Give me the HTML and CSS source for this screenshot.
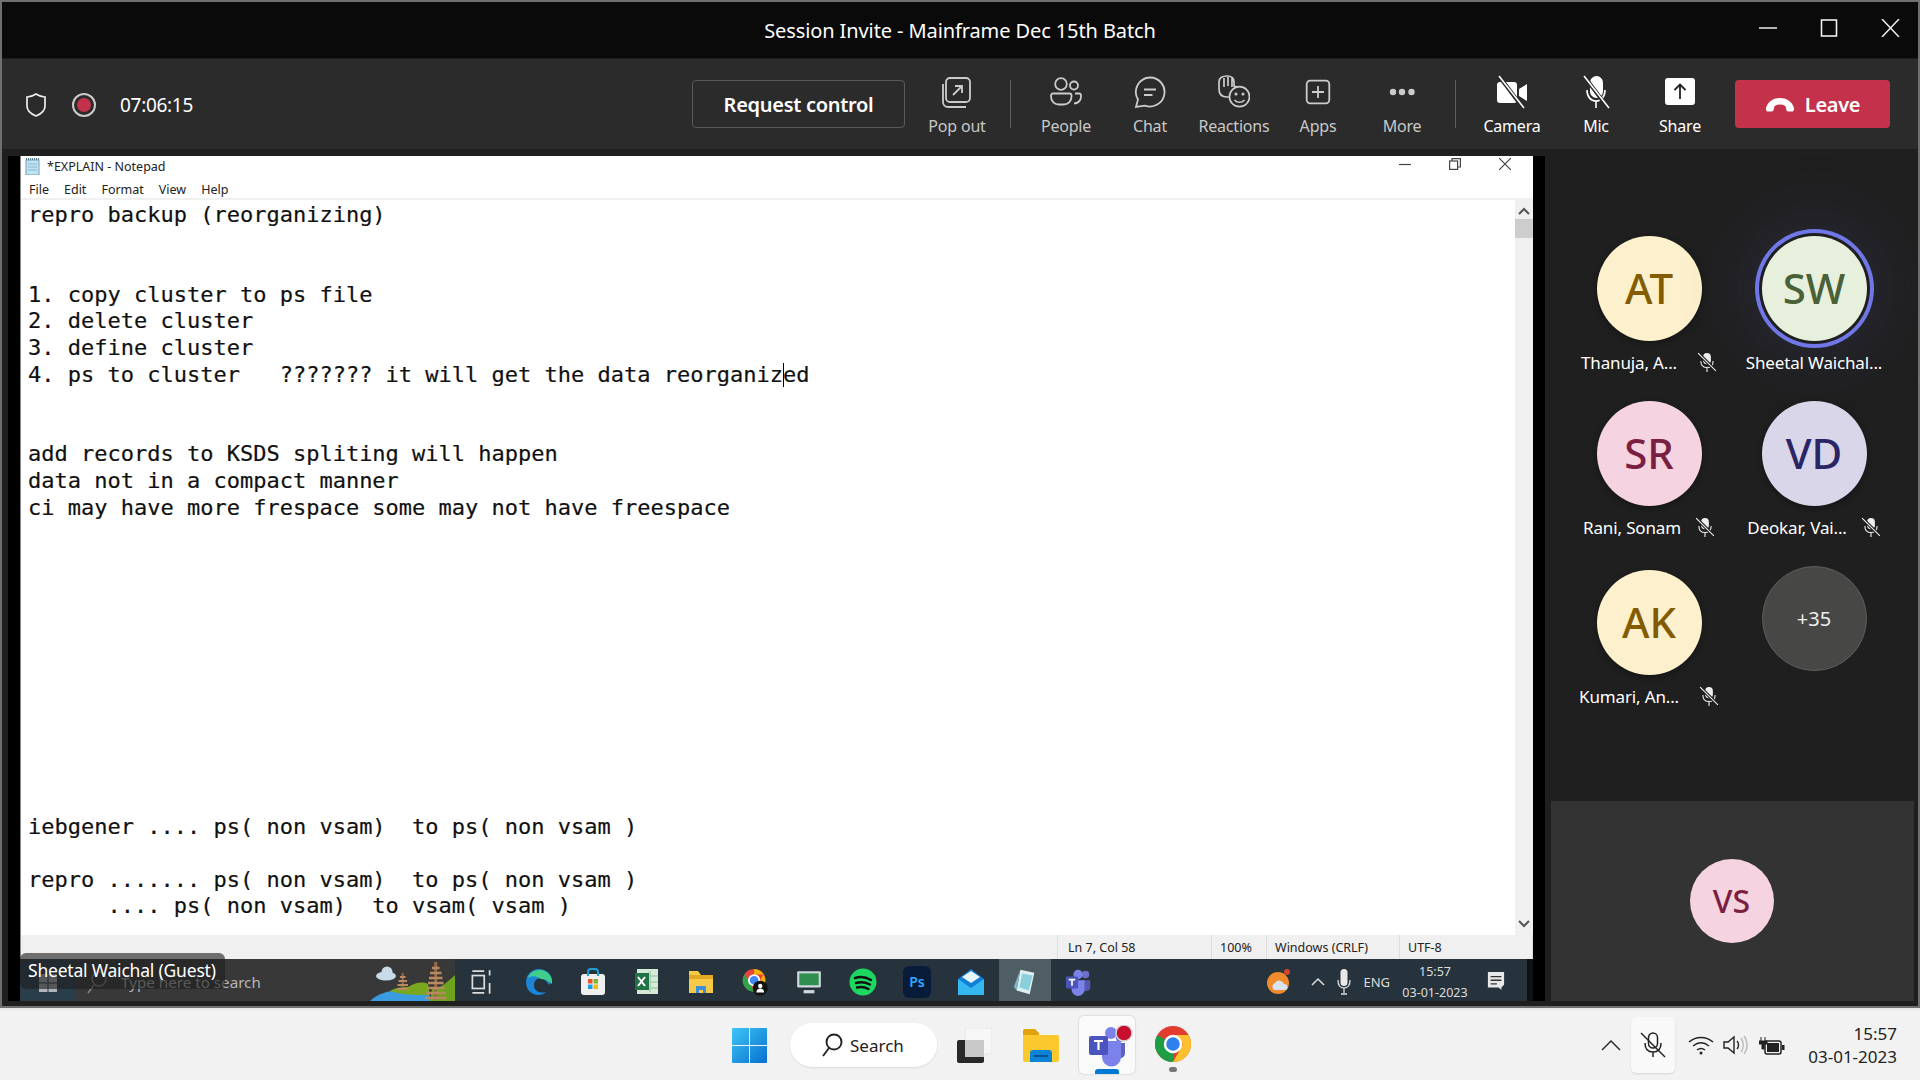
FILE: index.html
```html
<!DOCTYPE HTML>
<html>
<head>
    <title>Session Invite - Mainframe Dec 15th Batch</title>
    <link rel="stylesheet" href="styles.css">
</head>
<body>
    <div class="meeting">
        <div class="titlebar">
            <div class="title">Session Invite - Mainframe Dec 15th Batch</div>
            <div class="win-buttons">
                <svg width="18" height="18" viewBox="0 0 18 18"><path d="M0 9h18" stroke="#ddd" stroke-width="1.6"/></svg>
                <svg width="18" height="18" viewBox="0 0 18 18"><rect x="1.5" y="1" width="15" height="16" fill="none" stroke="#eee" stroke-width="1.6"/></svg>
                <svg width="19" height="18" viewBox="0 0 19 18"><path d="M1 0l17 18M18 0L1 18" stroke="#eee" stroke-width="1.5"/></svg>
            </div>
        </div>

        <div class="toolbar">
            <div class="status">
                <svg width="22" height="26" viewBox="0 0 22 26"><path d="M11 2c3 2 6 3 9 3v9c0 5-4 8-9 10C6 22 2 19 2 14V5c3 0 6-1 9-3z" fill="none" stroke="#eee" stroke-width="1.7"/></svg>
                <div class="rec"><div class="rec-dot"></div></div>
                <div class="clock">07:06:15</div>
            </div>
            <div class="request">Request control</div>
            <div class="tool">
                <svg class="ico" viewBox="0 0 32 34" fill="none" stroke="#ccc" stroke-width="1.8"><rect x="5" y="3" width="24" height="24" rx="4"/><path d="M2 9v18a5 5 0 0 0 5 5h18"/><path d="M12 20l9-9M14 11h7v7"/></svg>
                <div class="tool-label">Pop out</div>
            </div>
            <div class="sep"></div>
            <div class="tool">
                <svg class="ico" viewBox="0 0 32 34" fill="none" stroke="#ccc" stroke-width="1.8"><circle cx="11" cy="9" r="5.800"/><circle cx="24" cy="10.500" r="4"/><path d="M3 18.500h16.500a2 2 0 0 1 2 2v1c0 5-3.500 8-8 8H9c-4.500 0-8-3-8-8v-1a2 2 0 0 1 2-2zM25 18.500h4a2 2 0 0 1 2 2v1c0 4-3 7-7 7"/></svg>
                <div class="tool-label">People</div>
            </div>
            <div class="tool">
                <svg class="ico" viewBox="0 0 32 34" fill="none" stroke="#ccc" stroke-width="1.8"><path d="M16 2.500a14.500 14.500 0 1 1-5 28.100L2 32l2-7.500A14.500 14.500 0 0 1 16 2.500z"/><path d="M10 14.500h12M10 20h8.500"/></svg>
                <div class="tool-label">Chat</div>
            </div>
            <div class="tool">
                <svg class="ico" viewBox="0 0 32 34" fill="none" stroke="#ccc" stroke-width="1.700"><path d="M1 14V7c0-4 3-6 8-6s7 2 7 6v4l3 1M1 14c0 5 3 8 8 8h2M6 3v9M10 2v9M14 3v9"/><circle cx="21.500" cy="21.700" r="10"/><path d="M16.500 25c3 3 7 3 10 0"/><circle cx="18" cy="19" r=".7"/><circle cx="25" cy="19" r=".7"/></svg>
                <div class="tool-label">Reactions</div>
            </div>
            <div class="tool">
                <svg class="ico" viewBox="0 0 32 34" fill="none" stroke="#ccc" stroke-width="1.8"><rect x="4.700" y="5.700" width="22.600" height="22.600" rx="3.500"/><path d="M16 11v12M10 17h12"/></svg>
                <div class="tool-label">Apps</div>
            </div>
            <div class="tool">
                <svg class="ico" viewBox="0 0 32 34" fill="#ccc"><circle cx="7" cy="17" r="3.200"/><circle cx="16" cy="17" r="3.200"/><circle cx="25.500" cy="17" r="3.200"/></svg>
                <div class="tool-label">More</div>
            </div>
            <div class="sep"></div>
            <div class="tool tool-on">
                <svg class="ico" viewBox="0 0 32 34"><rect x="1" y="7" width="20" height="21" rx="3" fill="#fff"/><path d="M23 14l8-5v17l-8-5z" fill="#fff"/><path d="M3 1l24 32" stroke="#2b2b2b" stroke-width="4"/><path d="M3 1l25 32" stroke="#fff" stroke-width="1.6"/></svg>
                <div class="tool-label">Camera</div>
            </div>
            <div class="tool tool-on">
                <svg class="ico" viewBox="0 0 32 34"><rect x="10" y="1" width="13" height="22" rx="6.5" fill="#fff"/><path d="M7 15c0 7 4 11 9 11s9-4 9-11M16 26v7" fill="none" stroke="#fff" stroke-width="1.6"/><path d="M4 1l24 32" stroke="#2b2b2b" stroke-width="4"/><path d="M4 1l25 32" stroke="#fff" stroke-width="1.6"/></svg>
                <div class="tool-label">Mic</div>
            </div>
            <div class="tool tool-on">
                <svg class="ico" viewBox="0 0 32 34"><rect x="1" y="3" width="30" height="27" rx="3" fill="#fff"/><path d="M16 24V10M10.500 15L16 9.500l5.500 5.500" fill="none" stroke="#222" stroke-width="1.8"/></svg>
                <div class="tool-label">Share</div>
            </div>
            <div class="leave">
                <svg width="30" height="16" viewBox="0 0 30 16"><path d="M1 11C3 4 9 1 15 1s12 3 14 10c.4 2-.5 3.500-2.500 3.500h-3C22 14.500 21 13 21 11c0-2-2-3.500-6-3.500S9 9 9 11c0 2-1 3.500-2.500 3.500h-3C1.500 14.500.6 13 1 11z" fill="#fff"/></svg>
                <span>Leave</span>
            </div>
        </div>

        <div class="content">
            <div class="stage">
                <div class="notepad">
                    <div class="np-head">
                        <div class="np-title">
                            <svg width="16" height="17" viewBox="0 0 16 17"><rect x="1" y="2" width="13" height="15" fill="#bfe3f2" stroke="#6f9fb5"/><path d="M1 1h13" stroke="#5a7f90" stroke-width="2" stroke-dasharray="1 1"/><path d="M3 6h9M3 9h9M3 12h9" stroke="#8cb6c8"/></svg>
                            <span>*EXPLAIN - Notepad</span>
                            <div class="np-buttons">
                                <svg width="12" height="12" viewBox="0 0 12 12"><path d="M0 6.500h12" stroke="#444" stroke-width="1.2"/></svg>
                                <svg width="12" height="12" viewBox="0 0 12 12" fill="none" stroke="#444" stroke-width="1.200"><rect x=".6" y="3" width="8" height="8.400"/><path d="M3 3V.6h8.400V9H8.600"/></svg>
                                <svg width="12" height="12" viewBox="0 0 12 12"><path d="M0 0l12 12M12 0L0 12" stroke="#444" stroke-width="1.2"/></svg>
                            </div>
                        </div>
                        <div class="np-menu"><span>File</span><span>Edit</span><span>Format</span><span>View</span><span>Help</span></div>
                    </div>
                    <div class="np-body">
<pre class="np-text">repro backup (reorganizing)


1. copy cluster to ps file
2. delete cluster
3. define cluster
4. ps to cluster   ??????? it will get the data reorganiz<span class="caret"></span>ed


add records to KSDS spliting will happen
data not in a compact manner
ci may have more frespace some may not have freespace











iebgener .... ps( non vsam)  to ps( non vsam )

repro ....... ps( non vsam)  to ps( non vsam )
      .... ps( non vsam)  to vsam( vsam )</pre>
                        <div class="scrollbar">
                            <svg width="12" height="8" viewBox="0 0 12 8"><path d="M1 7l5-5 5 5" fill="none" stroke="#555" stroke-width="2"/></svg>
                            <div class="thumb"></div>
                            <svg class="arrow-down" width="12" height="8" viewBox="0 0 12 8"><path d="M1 1l5 5 5-5" fill="none" stroke="#555" stroke-width="2"/></svg>
                        </div>
                    </div>
                    <div class="np-status">
                        <span class="st st-pos">Ln 7, Col 58</span>
                        <span class="st st-zoom">100%</span>
                        <span class="st st-eol">Windows (CRLF)</span>
                        <span class="st st-enc">UTF-8</span>
                    </div>
                </div>

                <div class="share-taskbar">
                    <div class="share-start">
                        <svg width="18" height="18" viewBox="0 0 18 18" fill="#aeb4b8"><rect width="8.500" height="8.500"/><rect x="9.500" width="8.500" height="8.500"/><rect y="9.500" width="8.500" height="8.500"/><rect x="9.500" y="9.500" width="8.500" height="8.500"/></svg>
                    </div>
                    <div class="share-search">
                        <svg width="20" height="24" viewBox="0 0 20 24" fill="none" stroke="#888" stroke-width="1.400"><circle cx="12" cy="9" r="7"/><path d="M7 15l-6 8"/></svg>
                        <span>Type here to search</span>
                        <svg class="scene" width="85" height="42" viewBox="0 0 85 42">
                            <path d="M0 42C8 34 20 31 36 31h21l5 11z" fill="#3a9be0"/>
                            <path d="M20 32c6-4 14-4 18-4 6-4 14-6 20-3l2 11c-16 0-28 0-40-4z" fill="#79a81f"/>
                            <path d="M60 42l2-12c8 0 14-6 23-14v26z" fill="#6da31c"/>
                            <path d="M65.700 3v38" stroke="#9b6b45" stroke-width="3"/>
                            <path d="M62 9h7.500M60 14h11.500M59 19h13.500M58 24h15.500M57 29h17.500M56 34h19.500M55 39h21.500" stroke="#b98a62" stroke-width="2.400"/>
                            <path d="M32.700 14v17" stroke="#9b6b45" stroke-width="2"/>
                            <path d="M30 18h5.500M28.500 22h8.500M27.500 26h10.500M27 30h11.500" stroke="#b98a62" stroke-width="2"/>
                            <ellipse cx="16" cy="17" rx="10" ry="4.500" fill="#c7dbe8"/>
                            <circle cx="17" cy="13" r="5.500" fill="#c7dbe8"/>
                        </svg>
                    </div>
                    <div class="share-apps">
                        <svg class="app app-first" viewBox="0 0 26 26" fill="none" stroke="#ddd" stroke-width="1.600"><path d="M5 3h11M5 23h11"/><rect x="5" y="7" width="11" height="12"/><path d="M21 2v5M21 10h.1M21 14v10"/></svg>
                        <svg class="app" viewBox="0 0 28 28"><path d="M14 1a13 13 0 0 0-13 13c0 8 6 13 12 13 3 0 6-1 8-3-8 2-12-2-12-7s5-8 9-6c4 2 6 6 6 6 2-2 3-4 3-6A13 13 0 0 0 14 1z" fill="#1c85d8"/><path d="M16 11c4 0 8 2 11 5 1-6-3-14-13-14C8 2 4 6 3 10c4-3 9-2 13 1z" fill="#3fce8c"/></svg>
                        <svg class="app" viewBox="0 0 26 28"><rect x="1" y="6" width="24" height="21" rx="3" fill="#f0f0f0"/><path d="M8 8V4a3 3 0 0 1 3-3h4a3 3 0 0 1 3 3v4" fill="none" stroke="#1ca0d8" stroke-width="2"/><rect x="8" y="11" width="4.500" height="4.500" fill="#e8542c"/><rect x="13.500" y="11" width="4.500" height="4.500" fill="#7cb82f"/><rect x="8" y="16.500" width="4.500" height="4.500" fill="#1c9ee6"/><rect x="13.500" y="16.500" width="4.500" height="4.500" fill="#f5b60a"/></svg>
                        <svg class="app" viewBox="0 0 26 28"><rect x="3" y="1" width="21" height="25" fill="#d5ead9"/><path d="M16 3v21M16 8h8M16 14h8M16 20h8" stroke="#8cc29c"/><rect x="1" y="5" width="14" height="17" fill="#217346"/><path d="M4 9l7 9M11 9l-7 9" stroke="#fff" stroke-width="2"/></svg>
                        <svg class="app" viewBox="0 0 28 28"><path d="M2 3h9l3 4h12v18H2z" fill="#f7c948"/><rect x="2" y="7" width="24" height="4" fill="#e0a921"/><path d="M9 25v-7h10v7h-3v-3h-4v3z" fill="#3a8fd6"/></svg>
                        <svg class="app" viewBox="0 0 32 32"><circle cx="15" cy="14" r="13" fill="#e8453c"/><path d="M15 1a13 13 0 0 1 11 6.500H15z" fill="#f4b400"/><path d="M26 7.500A13 13 0 0 1 15 27l5-10z" fill="#f4b400"/><path d="M4 7l6 10 5 10A13 13 0 0 1 4 7z" fill="#2aa54a"/><circle cx="15" cy="14" r="6" fill="#4285f4" stroke="#fff" stroke-width="2"/><circle cx="22" cy="23" r="8.500" fill="#111"/><circle cx="22" cy="20.500" r="2.500" fill="#fff"/><path d="M17.500 28c0-3 2-4.500 4.500-4.500s4.500 1.500 4.500 4.500z" fill="#fff"/></svg>
                        <svg class="app" viewBox="0 0 26 26"><rect x="2" y="3" width="22" height="15" rx="1" fill="#cfd8dc"/><rect x="4" y="5" width="18" height="11" fill="#2f8f4e"/><path d="M8 22h10" stroke="#cfd8dc" stroke-width="3"/></svg>
                        <svg class="app" viewBox="0 0 28 28"><circle cx="14" cy="14" r="13.500" fill="#1ed760"/><path d="M6 10c6-2 11-1 16 2M7 15c5-1.500 9-1 14 1.500M8 19.500c4-1 8-.5 11.500 1.500" fill="none" stroke="#111" stroke-width="2.400" stroke-linecap="round"/></svg>
                        <div class="ps-icon">Ps</div>
                        <svg class="app" viewBox="0 0 28 28"><path d="M1 11L14 1l13 10v16H1z" fill="#0f7fd8"/><path d="M1 11l13 9 13-9v16H1z" fill="#35b8f0"/><path d="M5 9l9-6 9 6-9 6z" fill="#e8f6fc"/></svg>
                        <div class="app-on">
                            <svg class="app" viewBox="0 0 26 30"><path d="M8 2l15 3-5 23-14-4z" fill="#dfeef0"/><path d="M4 24L8 2 1 20z" fill="#7fb6c4"/><path d="M10 6l11 2-4 16-10-3z" fill="#8ad0dc"/></svg>
                        </div>
                        <svg class="app" viewBox="0 0 30 30"><circle cx="22" cy="7" r="4" fill="#6b6fc9"/><circle cx="14" cy="7" r="5" fill="#7b83eb"/><path d="M18 13h9v9a5 5 0 0 1-9 0z" fill="#5558af"/><path d="M7 13h14v10a7 7 0 0 1-14 0z" fill="#7b83eb"/><rect x="1" y="9" width="13" height="13" rx="1.500" fill="#4b53bc"/><path d="M4 12.500h7M7.500 12.500V19" stroke="#fff" stroke-width="1.800"/></svg>
                    </div>
                    <div class="share-tray">
                        <svg width="26" height="28" viewBox="0 0 26 28"><circle cx="12" cy="15" r="11" fill="#ef8b2c"/><path d="M8 22a4 4 0 0 1 1-7 5 5 0 0 1 9 1 3 3 0 0 1 1 6z" fill="#d9e4f0"/><circle cx="21" cy="4" r="3" fill="#d4442e"/></svg>
                        <svg class="tray-chevron" width="14" height="9" viewBox="0 0 14 9"><path d="M1 8l6-6 6 6" fill="none" stroke="#ddd" stroke-width="1.500"/></svg>
                        <svg width="14" height="26" viewBox="0 0 14 26"><rect x="3.500" y="0" width="7" height="17" rx="3.500" fill="#e8e8e8"/><path d="M1 11c0 5 2 8 6 8s6-3 6-8M7 19v5M4 25h6" fill="none" stroke="#ddd" stroke-width="1.300"/></svg>
                        <span class="eng">ENG</span>
                        <div class="share-time"><div>15:57</div><div>03-01-2023</div></div>
                        <svg width="18" height="22" viewBox="0 0 20 24"><path d="M1 1h18v14l-3 3v3l-3-3H1z" fill="#e8e8e8"/><path d="M4 6h12M4 10h12M4 14h7" stroke="#333" stroke-width="1.500"/></svg>
                    </div>
                </div>

                <div class="name-tag">Sheetal Waichal (Guest)</div>
            </div>

            <div class="panel">
                <div class="roster">
                    <div class="person">
                        <div class="avatar av-at">AT</div>
                        <div class="person-name wide"><span>Thanuja, A...</span><svg class="mic-off" viewBox="0 0 18 18"><rect x="5.500" y="1" width="7" height="10" rx="3.500" fill="#eee"/><path d="M3.500 8c0 4 2.500 6 5.500 6s5.500-2 5.500-6M9 14v4" fill="none" stroke="#eee" stroke-width="1"/><path d="M1 1l16 16" stroke="#1f1f1f" stroke-width="3"/><path d="M1 1l16 16" stroke="#eee" stroke-width="1"/></svg></div>
                    </div>
                    <div class="person">
                        <div class="avatar av-sw">SW</div>
                        <div class="person-name"><span>Sheetal Waichal...</span></div>
                    </div>
                    <div class="person">
                        <div class="avatar av-sr">SR</div>
                        <div class="person-name"><span>Rani, Sonam</span><svg class="mic-off" viewBox="0 0 18 18"><rect x="5.500" y="1" width="7" height="10" rx="3.500" fill="#eee"/><path d="M3.500 8c0 4 2.500 6 5.500 6s5.500-2 5.500-6M9 14v4" fill="none" stroke="#eee" stroke-width="1"/><path d="M1 1l16 16" stroke="#1f1f1f" stroke-width="3"/><path d="M1 1l16 16" stroke="#eee" stroke-width="1"/></svg></div>
                    </div>
                    <div class="person">
                        <div class="avatar av-vd">VD</div>
                        <div class="person-name"><span>Deokar, Vai...</span><svg class="mic-off" viewBox="0 0 18 18"><rect x="5.500" y="1" width="7" height="10" rx="3.500" fill="#eee"/><path d="M3.500 8c0 4 2.500 6 5.500 6s5.500-2 5.500-6M9 14v4" fill="none" stroke="#eee" stroke-width="1"/><path d="M1 1l16 16" stroke="#1f1f1f" stroke-width="3"/><path d="M1 1l16 16" stroke="#eee" stroke-width="1"/></svg></div>
                    </div>
                    <div class="person person-low">
                        <div class="avatar av-at">AK</div>
                        <div class="person-name wide"><span>Kumari, An...</span><svg class="mic-off" viewBox="0 0 18 18"><rect x="5.500" y="1" width="7" height="10" rx="3.500" fill="#eee"/><path d="M3.500 8c0 4 2.500 6 5.500 6s5.500-2 5.500-6M9 14v4" fill="none" stroke="#eee" stroke-width="1"/><path d="M1 1l16 16" stroke="#1f1f1f" stroke-width="3"/><path d="M1 1l16 16" stroke="#eee" stroke-width="1"/></svg></div>
                    </div>
                    <div class="person">
                        <div class="avatar av-more">+35</div>
                    </div>
                </div>
                <div class="self-tile">
                    <div class="self-avatar">VS</div>
                </div>
            </div>
        </div>
    </div>

    <div class="taskbar">
        <div></div>
        <div class="task-center">
            <svg width="35" height="35" viewBox="0 0 35 35"><defs><linearGradient id="winblue" x1="0" y1="0" x2="1" y2="1"><stop offset="0" stop-color="#3fc5f7"/><stop offset="1" stop-color="#0670cf"/></linearGradient></defs><path d="M1 0h16v17H0V1a1 1 0 0 1 1-1zM18 0h16a1 1 0 0 1 1 1v16H18zM0 18h17v17H1a1 1 0 0 1-1-1zM18 18h17v16a1 1 0 0 1-1 1H18z" fill="url(#winblue)"/></svg>
            <div class="task-search">
                <svg width="22" height="24" viewBox="0 0 22 24" fill="none" stroke="#222" stroke-width="1.900"><circle cx="13" cy="9" r="7.500"/><path d="M8 15l-6 8"/></svg>
                <span>Search</span>
            </div>
            <svg class="task-view" width="35" height="35" viewBox="0 0 35 35"><rect x="8" y="0" width="27" height="26" rx="2" fill="#f7f7f7" stroke="#e5e5e5"/><rect x="0" y="12" width="27" height="23" rx="2" fill="#2a2a2a"/><rect x="8" y="12" width="19" height="17" fill="#c9c9c9"/></svg>
            <svg width="36" height="33" viewBox="0 0 36 33"><path d="M0 2a2 2 0 0 1 2-2h10l4 4v6H0z" fill="#e0a30b"/><path d="M0 6h34a2 2 0 0 1 2 2v23a2 2 0 0 1-2 2H2a2 2 0 0 1-2-2z" fill="#fbc92e"/><path d="M7 33v-9a3 3 0 0 1 3-3h16a3 3 0 0 1 3 3v9z" fill="#0a82d6"/><path d="M11 27h14" stroke="#06528f" stroke-width="2"/></svg>
            <div class="teams-tile">
                <svg width="44" height="42" viewBox="0 0 44 42"><circle cx="22" cy="8" r="6" fill="#7b83eb"/><circle cx="31" cy="13" r="4" fill="#6b73d8"/><path d="M27 18h9v11a5.500 5.500 0 0 1-9 3z" fill="#5b62bf"/><path d="M13 16h19v16a9.500 9.500 0 0 1-19 0z" fill="#7b83eb"/><rect x="0" y="11" width="19" height="19" rx="2" fill="#4b53bc"/><path d="M5 16h9M9.500 16v9" stroke="#fff" stroke-width="2.200"/><circle cx="35" cy="8" r="8" fill="#c8102e" stroke="#d8d8d8" stroke-width="1.500"/></svg>
                <div class="teams-bar"></div>
            </div>
            <div class="chrome-wrap">
                <svg width="36" height="36" viewBox="0 0 36 36"><circle cx="18" cy="18" r="18" fill="#e33b2e"/><path d="M18 36A18 18 0 0 1 2.400 9L18 18z" fill="#1f9d45"/><path d="M18 36L28 18l-10-9h15.600A18 18 0 0 1 18 36z" fill="#fbc02d"/><circle cx="18" cy="18" r="8" fill="#2f80ed" stroke="#fff" stroke-width="2.500"/></svg>
                <div class="chrome-dot"></div>
            </div>
        </div>
        <div class="task-right">
            <svg width="20" height="12" viewBox="0 0 20 12"><path d="M1 11l9-9 9 9" fill="none" stroke="#222" stroke-width="1.400"/></svg>
            <div class="mic-tile">
                <svg width="26" height="26" viewBox="0 0 26 26" fill="none" stroke="#222" stroke-width="1.500"><rect x="8.500" y="1" width="9" height="15" rx="4.500"/><path d="M5 11c0 6 3 9 8 9s8-3 8-9M13 20v5"/><path d="M1 1l24 24"/></svg>
            </div>
            <svg class="tray-wifi" width="26" height="20" viewBox="0 0 26 20" fill="none" stroke="#222" stroke-width="1.500"><path d="M1 7c7-6 17-6 24 0M5 11c5-4 11-4 16 0M9 15c2.500-2 5.500-2 8 0"/><circle cx="13" cy="18" r="1.500" fill="#222" stroke="none"/></svg>
            <svg class="tray-sound" width="26" height="20" viewBox="0 0 26 20" fill="none" stroke="#222" stroke-width="1.400"><path d="M1 7v6h4l6 5V2L5 7z"/><path d="M14 6c2 2 2 6 0 8"/><path d="M18 3c3 4 3 10 0 14M21 1c4 5 4 13 0 18" stroke="#bbb"/></svg>
            <svg class="tray-batt" width="26" height="20" viewBox="0 0 26 20"><path d="M2 2v4M6 2v4M0 6h8v3H5v5H3V9H0z" fill="#222" stroke="#222"/><rect x="6" y="6" width="16" height="13" rx="2" fill="none" stroke="#222" stroke-width="1.500"/><rect x="8" y="8" width="12" height="9" fill="#222"/><rect x="23" y="10" width="2.500" height="5" fill="#222"/></svg>
            <div class="task-time"><div>15:57</div><div>03-01-2023</div></div>
        </div>
    </div>
</body>
</html>
```
FILE: styles.css
```css
html, body {
    margin: 0;
    width: 1920px;
    height: 1080px;
    overflow: hidden;
}
body {
    background: #f2f2f2;
    font-family: "Noto Sans", sans-serif;
}
svg {
    display: block;
    flex: none;
}

/* teams window */
.meeting {
    box-sizing: border-box;
    height: 1008px;
    border: 2px solid #6f6f6f;
    display: flex;
    flex-direction: column;
}
.titlebar {
    height: 57px;
    flex: none;
    box-sizing: border-box;
    background: #0a0a0a;
    border-bottom: 1px solid #1d1d1d;
    color: #fff;
    display: flex;
    align-items: center;
    justify-content: center;
    position: relative;
}
.title {
    font-size: 20px;
    letter-spacing: -.1px;
}
.win-buttons {
    position: absolute;
    right: 18px;
    top: 17px;
    display: flex;
    gap: 43px;
}

.toolbar {
    height: 90px;
    flex: none;
    background: #2b2b2b;
    display: flex;
    padding-right: 28px;
}
.status {
    display: flex;
    align-items: center;
    margin-right: auto;
    padding: 1px 0 0 23px;
    color: #fff;
}
.rec {
    width: 24px;
    height: 24px;
    box-sizing: border-box;
    border: 2px solid #ccc;
    border-radius: 50%;
    padding: 3px;
    margin-left: 25px;
}
.rec-dot {
    width: 14px;
    height: 14px;
    border-radius: 50%;
    background: #c4314b;
}
.clock {
    font-size: 19px;
    margin-left: 24px;
    letter-spacing: -.3px;
}
.request {
    box-sizing: border-box;
    width: 213px;
    height: 48px;
    margin: 21px 10px 0 0;
    border: 1px solid #5a5a5a;
    border-radius: 4px;
    color: #fff;
    font-size: 20px;
    font-weight: 600;
    line-height: 47px;
    text-align: center;
    letter-spacing: -.3px;
}
.tool {
    width: 84px;
    padding-top: 16px;
    display: flex;
    flex-direction: column;
    align-items: center;
}
.ico {
    width: 32px;
    height: 34px;
}
.tool-label {
    margin-top: 5px;
    height: 24px;
    line-height: 24px;
    font-size: 16px;
    letter-spacing: -.2px;
    color: #c8c8c8;
}
.tool-on .tool-label {
    color: #fff;
}
.sep {
    width: 1px;
    height: 48px;
    margin: 21px 13px 0 11px;
    background: #5f5f5f;
}
.sep + .tool-on {
    margin-left: 1px;
}
.leave {
    box-sizing: border-box;
    width: 155px;
    height: 48px;
    margin: 21px 0 0 13px;
    padding-top: 1px;
    border-radius: 4px;
    background: #c4314b;
    color: #fff;
    font-size: 20px;
    font-weight: 600;
    letter-spacing: -.3px;
    display: flex;
    align-items: center;
    justify-content: center;
    gap: 10px;
}

.content {
    flex: 1;
    min-height: 0;
    background: #1f1f1f;
    padding: 7px 0 5px 6px;
    display: flex;
}

/* shared screen */
.stage {
    width: 1537px;
    flex: none;
    box-sizing: border-box;
    background: #000;
    padding: 0 12px;
    display: flex;
    flex-direction: column;
    position: relative;
}
.notepad {
    flex: 1;
    min-height: 0;
    background: #fff;
    border-left: 1px solid #8a8a8a;
    display: flex;
    flex-direction: column;
    color: #222;
}
.np-head {
    height: 44px;
    flex: none;
    box-sizing: border-box;
    border-bottom: 2px solid #f0f0f0;
    font-size: 12.5px;
}
.np-title {
    height: 21px;
    padding-left: 4px;
    display: flex;
    align-items: center;
    gap: 6px;
}
.np-buttons {
    margin: -5px 0 0 auto;
    padding-right: 22px;
    display: flex;
    gap: 38px;
}
.np-menu {
    padding: 4px 0 0 8px;
    display: flex;
    gap: 15px;
    line-height: 17px;
}
.np-body {
    flex: 1;
    min-height: 0;
    display: flex;
}
.np-text {
    flex: 1;
    margin: 0;
    padding: 2px 0 0 7px;
    font-family: "DejaVu Sans Mono", monospace;
    font-size: 22px;
    line-height: 26.6px;
    color: #111;
    -webkit-text-stroke: .2px #111;
}
.caret {
    display: inline-block;
    height: 24px;
    width: 1px;
    margin-right: -1px;
    vertical-align: -5px;
    background: #000;
}
.scrollbar {
    width: 18px;
    flex: none;
    background: #f0f0f0;
    display: flex;
    flex-direction: column;
    align-items: center;
    padding-top: 7px;
}
.thumb {
    width: 18px;
    height: 19px;
    margin-top: 4px;
    background: #cdcdcd;
}
.arrow-down {
    margin-top: auto;
    margin-bottom: 7px;
}
.np-status {
    height: 24px;
    flex: none;
    box-sizing: border-box;
    background: #f0f0f0;
    display: flex;
    font-size: 12.5px;
    line-height: 25px;
    padding-left: 1036px;
}
.st {
    box-sizing: border-box;
    border-left: 1px solid #dcdcdc;
    padding-left: 8px;
}
.st-pos { width: 154px; padding-left: 10px; }
.st-zoom { width: 55px; }
.st-eol { width: 133px; }
.st-enc { flex: 1; border-right: 1px solid #dcdcdc; }

.share-taskbar {
    height: 42px;
    flex: none;
    box-sizing: border-box;
    display: flex;
    background: #26333c;
    border-right: 6px solid #111;
}
.share-start {
    width: 55px;
    flex: none;
    background: #2a3d4a;
    display: flex;
    align-items: center;
    padding: 6px 0 0 19px;
    box-sizing: border-box;
}
.share-search {
    width: 380px;
    flex: none;
    background: #383838;
    display: flex;
    align-items: center;
    padding: 4px 0 0 12px;
    box-sizing: border-box;
    color: #b5b5b5;
    font-size: 15.2px;
    gap: 14px;
}
.scene {
    margin: -4px 0 0 auto;
}
.share-apps {
    display: flex;
    align-items: center;
    padding: 4px 0 0 12px;
    gap: 26px;
}
.app {
    width: 28px;
    height: 28px;
}
.app-first {
    margin-right: 4px;
}
.ps-icon {
    width: 28px;
    height: 32px;
    box-sizing: border-box;
    border-radius: 6px;
    background: #081c3a;
    color: #31a8ff;
    font-size: 14px;
    font-weight: 600;
    line-height: 32px;
    text-align: center;
}
.app-on {
    width: 52px;
    height: 42px;
    margin: -4px -12px 0;
    padding-top: 4px;
    box-sizing: border-box;
    background: #4f5d65;
    display: flex;
    align-items: center;
    justify-content: center;
}
.share-tray {
    margin-left: auto;
    padding: 3px 22px 0 0;
    display: flex;
    align-items: center;
    color: #ddd;
    gap: 12px;
}
.tray-chevron {
    margin-left: 7px;
}
.eng {
    font-size: 13px;
}
.share-time {
    width: 76px;
    margin: 0 2px 0 -5px;
    font-size: 12.5px;
    line-height: 21px;
    text-align: center;
}
.name-tag {
    position: absolute;
    left: 12px;
    bottom: 12px;
    width: 205px;
    height: 36px;
    box-sizing: border-box;
    padding-left: 8px;
    border-radius: 6px;
    background: rgba(30, 30, 30, .62);
    color: #fff;
    font-size: 17.5px;
    line-height: 34px;
    letter-spacing: -.2px;
}

/* participants */
.panel {
    flex: 1;
    min-width: 0;
    display: flex;
    flex-direction: column;
    padding: 0 4px 0 6px;
    margin-bottom: -5px;
}
.roster {
    display: grid;
    grid-template-columns: 165px 165px;
    grid-auto-rows: 165px;
    justify-content: center;
    padding: 80px 2px 0 0;
}
.person {
    display: flex;
    flex-direction: column;
    align-items: center;
}
.person-low {
    padding-top: 4px;
}
.avatar {
    width: 105px;
    height: 105px;
    flex: none;
    border-radius: 50%;
    font-size: 42px;
    font-weight: 500;
    line-height: 103px;
    text-align: center;
    box-shadow: 0 2px 6px rgba(0, 0, 0, .35);
}
.av-at { background: #fdf0cc; color: #835c00; }
.av-sw {
    background: #e7efdd;
    color: #4a6138;
    box-shadow: 0 0 0 3px #1f1f1f, 0 0 0 7px #7078e8, 0 0 70px 20px rgba(90, 95, 170, .16);
}
.av-sr { background: #f5d3e0; color: #7a1f42; }
.av-vd { background: #d9d6ea; color: #2b2566; }
.av-more {
    box-sizing: border-box;
    background: #474745;
    border: 1px solid #5e5e5e;
    color: #eee;
    font-size: 20px;
    font-weight: 400;
    line-height: 103px;
    box-shadow: none;
}
.person-name {
    margin-top: 9px;
    height: 24px;
    display: flex;
    align-items: center;
    color: #fff;
    font-size: 17px;
    letter-spacing: -.15px;
    white-space: nowrap;
}
.mic-off {
    width: 20px;
    height: 20px;
    margin-left: 14px;
}
.wide .mic-off {
    margin-left: 20px;
}
.self-tile {
    margin-top: auto;
    margin-bottom: 5px;
    height: 200px;
    padding-right: 2px;
    background: #333;
    display: flex;
    align-items: center;
    justify-content: center;
}
.self-avatar {
    width: 84px;
    height: 84px;
    border-radius: 50%;
    background: #f5d3e0;
    color: #7a1f42;
    font-size: 32px;
    font-weight: 500;
    line-height: 84px;
    text-align: center;
}

/* windows taskbar */
.taskbar {
    height: 72px;
    box-sizing: border-box;
    border-top: 2px solid #e8e8e8;
    display: grid;
    grid-template-columns: 1fr auto 1fr;
    background: #f2f2f2;
}
.task-center {
    display: flex;
    align-items: center;
    margin-left: 3px;
}
.task-search {
    width: 147px;
    height: 44px;
    margin: 0 20px 0 23px;
    box-sizing: border-box;
    border-radius: 22px;
    background: #fff;
    box-shadow: 0 1px 2px rgba(0, 0, 0, .1);
    display: flex;
    align-items: center;
    gap: 7px;
    padding-left: 31px;
    font-size: 17px;
    color: #222;
}
.task-view {
    margin-right: 31px;
}
.teams-tile {
    width: 56px;
    height: 58px;
    box-sizing: border-box;
    background: #fafafa;
    border-radius: 5px;
    box-shadow: 0 0 2px rgba(0, 0, 0, .25);
    padding: 9px 0 0 10px;
    margin: 0 20px;
    position: relative;
}
.teams-bar {
    position: absolute;
    left: 16px;
    bottom: 0;
    width: 24px;
    height: 5px;
    border-radius: 3px 3px 0 0;
    background: #0078d4;
}
.chrome-wrap {
    display: flex;
    flex-direction: column;
    align-items: center;
    gap: 5px;
    padding-top: 8px;
}
.chrome-dot {
    width: 8px;
    height: 5px;
    border-radius: 3px;
    background: #777;
}
.task-right {
    display: flex;
    align-items: center;
    justify-content: flex-end;
    padding-right: 23px;
}
.mic-tile {
    width: 44px;
    height: 56px;
    margin-left: 10px;
    border-radius: 5px;
    background: #f9f9f9;
    box-shadow: 0 1px 2px rgba(0, 0, 0, .12);
    display: flex;
    align-items: center;
    justify-content: center;
}
.tray-wifi { margin-left: 13px; }
.tray-sound { margin-left: 9px; }
.tray-batt { margin-left: 10px; }
.task-time {
    width: 112px;
    text-align: right;
    font-size: 17px;
    line-height: 23px;
    color: #222;
}
```
